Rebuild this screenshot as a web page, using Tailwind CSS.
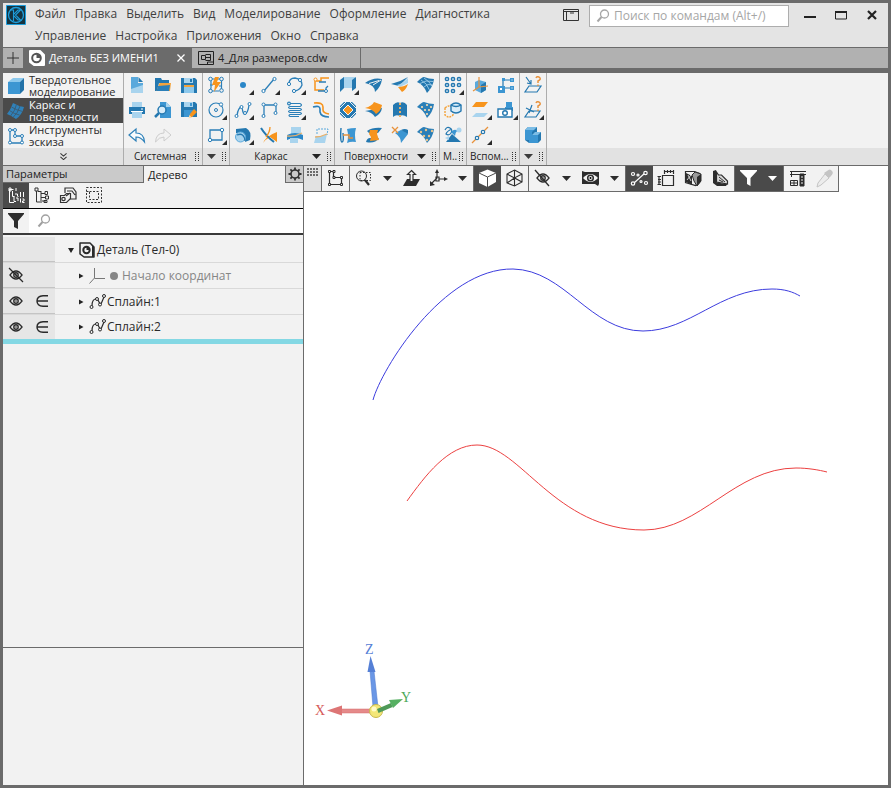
<!DOCTYPE html>
<html lang="ru">
<head>
<meta charset="utf-8">
<meta name="viewport" content="width=device-width, initial-scale=1">
<title>Деталь БЕЗ ИМЕНИ1</title>
<script src="https://cdn.jsdelivr.net/npm/@tailwindcss/browser@4"></script>
</head>
<body class="[font-family:'Open_Sans','Noto_Sans',sans-serif] text-xs text-[#3c3c3c] bg-[#f2f2f2]">
<svg class="hidden" aria-hidden="true">
  <symbol id="grip" viewBox="0 0 5 9"><path d="M0 0h1v1H0zM3 0h1v1H3zM0 2h1v1H0zM3 2h1v1H3zM0 4h1v1H0zM3 4h1v1H3zM0 6h1v1H0zM3 6h1v1H3zM0 8h1v1H0zM3 8h1v1H3z" fill="#333"/></symbol>
  <symbol id="caret" viewBox="0 0 9 5"><path d="M0 0h9L4.500 5z" fill="currentColor"/></symbol>
  <symbol id="corner" viewBox="0 0 5 5"><path d="M5 0v5H0z" fill="#2b2b2b" stroke="none"/></symbol>
  <symbol id="eye" viewBox="0 0 14 12"><path d="M1 6q6-8 12 0q-6 8-12 0z" fill="none" stroke="currentColor" stroke-width="1.300"/><circle cx="7" cy="6" r="2.200" fill="none" stroke="currentColor" stroke-width="1.400"/><circle cx="7" cy="6" r=".8" fill="currentColor"/></symbol>
  <symbol id="spline" viewBox="0 0 18 16"><path d="M3 12q0-7 4-7M9 6l2 4M12 10l3-7" fill="none" stroke="currentColor" stroke-width="1.200"/><g fill="#f2f2f2" stroke="currentColor"><circle cx="2.500" cy="13" r="1.500"/><circle cx="8" cy="5" r="1.500"/><circle cx="11" cy="10.500" r="1.500"/><circle cx="15" cy="2" r="1.500"/></g></symbol>
  <symbol id="lens" viewBox="0 0 14 14"><circle cx="8.500" cy="5" r="4" fill="none" stroke="currentColor" stroke-width="1.300"/><path d="M5.500 8L1.500 12.500" stroke="currentColor" stroke-width="2"/></symbol>
</svg>

<div class="flex min-h-screen flex-col border-3 border-[#6b6b6b]">
  <header class="flex items-start bg-[#e4e4e4]">
    <svg class="mt-0.5 ml-[3px] size-5 shrink-0" viewBox="0 0 20 20" fill="none" stroke="#1d9ddb"><path d="M.5.5h19v19H.5z" fill="#15333f"/><circle cx="10" cy="10" r="7.500" stroke-width="1.300"/><path d="M4 5h3.500v4.500L12 5h2.500L9.500 10l5 5H12L7.500 10.500V16" stroke-width="1.100"/></svg>
    <nav class="ml-[9px] flex min-w-0 flex-1 flex-wrap gap-x-[9px] pr-4 leading-[22px] text-[#3f3f3f]">
      <a href="#">Файл</a><a href="#">Правка</a><a href="#">Выделить</a><a href="#">Вид</a><a href="#">Моделирование</a><a href="#">Оформление</a><a href="#">Диагностика</a><span class="h-0 w-full"></span><a href="#">Управление</a><a href="#">Настройка</a><a href="#">Приложения</a><a href="#">Окно</a><a href="#">Справка</a>
    </nav>
    <button aria-label="Вид окна" class="mt-1.5 mr-2.5 shrink-0"><svg class="h-3 w-4" viewBox="0 0 16 12" fill="none" stroke="#333"><path d="M.5.5h15v11H.5zM.5 2.500h15M3.500 3v9"/><path d="M7 4h4"/></svg></button>
    <label class="mt-0.5 flex h-[22px] w-[200px] shrink-0 items-center border border-[#adadad] bg-white pl-1.5 text-[#a6a6a6]">
      <svg class="size-3.5 shrink-0"><use href="#lens"/></svg>
      <input type="search" aria-label="Поиск по командам" placeholder="Поиск по командам (Alt+/)" class="ml-1 w-full min-w-0 bg-transparent outline-none placeholder:text-[#a6a6a6]">
    </label>
    <div class="ml-[5px] mr-px flex h-6 shrink-0 text-[#222]">
      <button aria-label="Свернуть" class="grid w-[31px] place-items-center"><svg class="size-3.5" viewBox="0 0 14 14"><path d="M1 9h12" stroke="currentColor" stroke-width="2"/></svg></button>
      <button aria-label="Развернуть" class="grid w-[31px] place-items-center"><svg class="size-3.5" viewBox="0 0 14 14" fill="none" stroke="currentColor"><path d="M1.500 4v7h11V4"/><path d="M1 4h12" stroke-width="2"/></svg></button>
      <button aria-label="Закрыть" class="grid w-[31px] place-items-center"><svg class="size-3.5" viewBox="0 0 14 14"><path d="M3 3l8 8M11 3l-8 8" stroke="currentColor" stroke-width="2.200"/></svg></button>
    </div>
  </header>

  <div class="flex h-[26px] border-t border-b-5 border-[#6b6b6b] bg-[#b1b1b1]">
    <button aria-label="Новая вкладка" class="grid w-5 place-items-center"><svg class="size-3" viewBox="0 0 12 12"><path d="M6 0v12M0 6h12" stroke="#333"/></svg></button>
    <div class="flex w-[169px] items-center bg-[#6b6b6b] pl-1.5 text-white">
      <svg class="size-4" viewBox="0 0 16 16"><path d="M1 1h10l4 4v10H5l-4-3z" fill="#fff" stroke="#fff" stroke-width="2" stroke-linejoin="round"/><circle cx="7.500" cy="8" r="4.300" fill="#fff" stroke="#555" stroke-width="2"/><path d="M7.500 8l0-4q4 0 4 4z" fill="#555"/></svg>
      <a href="#" class="ml-1 flex-1 text-[11px] whitespace-nowrap">Деталь БЕЗ ИМЕНИ1</a>
      <button aria-label="Закрыть вкладку" class="mr-[7px]"><svg class="size-2" viewBox="0 0 8 8"><path d="M.5.5l7 7M7.500.5l-7 7" stroke="#fff" stroke-width="1.300"/></svg></button>
    </div>
    <a href="#" class="flex w-[169px] items-center border-r border-[#6b6b6b] pl-1.5 text-[11px] text-[#222]">
      <svg class="h-3.5 w-4" viewBox="0 0 16 14" fill="none" stroke="#222"><path d="M.5.5h15v13H.5z"/><path d="M3.500 4.500h4v4h-4zM7.500 3.500h5v6h-5M8 6.500h4M9.500 13v-2h6"/></svg>
      <span class="ml-1 whitespace-nowrap">4_Для размеров.cdw</span>
    </a>
  </div>

  <section aria-label="Инструменты" class="flex border-b border-[#6b6b6b] bg-[#f2f2f2]">
    <div class="flex w-[121px] shrink-0 flex-col border-r border-[#adadad] text-[11px] leading-3 whitespace-nowrap text-[#2a2a2a]">
      <button class="flex h-[25px] items-center pl-1 text-left"><svg class="size-[18px] shrink-0" viewBox="0 0 18 18"><path d="M1 5l5-4h11l-4 4z" fill="#8cc8ec"/><path d="M1 5h12v12H1z" fill="#3c96d2"/><path d="M13 5l4-4v12l-4 4z" fill="#2272a8"/></svg><span class="ml-1">Твердотельное<br>моделирование</span></button>
      <button class="flex h-[25px] items-center bg-[#4a4a4a] pl-1 text-left text-white"><svg class="size-[18px] shrink-0" viewBox="0 0 18 18"><path d="M6 1q5 3 11 4-2 8-8 12Q5 14 0 12 4 7 6 1z" fill="#2f80b8"/><path d="M9.500 2.500Q8 9 3.500 14M13 4q-2 7-7 11.500M4.500 5Q9 8 15.500 9.500M2.500 8.500Q7 12 12.500 13" stroke="#3d5668" stroke-width=".8" fill="none"/></svg><span class="ml-1">Каркас и<br>поверхности</span></button>
      <button class="flex h-[25px] items-center pl-1 text-left"><svg class="size-[18px] shrink-0" viewBox="0 0 18 18" fill="#fff" stroke="#2b7fb8"><path d="M3 16V3h5v6h7v7z" fill="none" stroke-width="1.300"/><circle cx="3" cy="3" r="1.500"/><circle cx="8" cy="3" r="1.500"/><circle cx="8" cy="9" r="1.500"/><circle cx="15" cy="9" r="1.500"/><circle cx="3" cy="15.500" r="1.500"/><circle cx="15" cy="15.500" r="1.500"/></svg><span class="ml-1">Инструменты<br>эскиза</span></button>
      <button aria-label="Ещё наборы" class="grid h-[17px] place-items-center bg-[#e2e2e2]"><svg class="h-[7px] w-[7px]" viewBox="0 0 8 8" fill="none" stroke="#333" stroke-width="1.200"><path d="M.5.5L4 3.500 7.500.5M.5 4.500L4 7.500l3.500-3"/></svg></button>
    </div>

    <!-- Системная -->
    <div class="w-[79px] shrink-0 border-r border-[#adadad] [&_svg]:block">
      <div class="grid grid-cols-[repeat(3,26px)] auto-rows-[25px]">
        <button aria-label="Создать"><svg class="h-[25px] w-[26px]" viewBox="0 0 26 25"><path d="M7 4h7v6h5v10H7z" fill="#a9d4ee"/><path d="M7 4h7v6h5v2L7 16z" fill="#5aa9dc"/><path d="M14.500 4L19 9h-4.500z" fill="#2478b0"/></svg></button>
        <button aria-label="Открыть"><svg class="h-[25px] w-[26px]" viewBox="0 0 26 25"><path d="M5 5h6l1 2h7v3H9l-2 8H5z" fill="#2478b0"/><path d="M9.500 10H21l-1 8H6.500z" fill="#f3a33c"/><path d="M8 13l12-1-1 6H6.500z" fill="#2b7fb8"/></svg></button>
        <button aria-label="Сохранить"><svg class="h-[25px] w-[26px]" viewBox="0 0 26 25"><path d="M5 5h14l2 2v13H5z" fill="#2478b0"/><path d="M8 5h9v5H8z" fill="#a9d4ee"/><path d="M14 6h2v3h-2z" fill="#2478b0"/><path d="M8 12h10v8H8z" fill="#8cc8ec"/><path d="M8 12h10v2H8z" fill="#f3a33c"/></svg></button>
        <button aria-label="Печать"><svg class="h-[25px] w-[26px]" viewBox="0 0 26 25"><path d="M8 4h10v5H8z" fill="#a9d4ee"/><path d="M5 9h16v7H5z" fill="#2478b0"/><path d="M8 14h10v6H8z" fill="#a9d4ee"/><path d="M7 13h12v1H7zM17 10.500h2v1h-2z" fill="#fff"/></svg></button>
        <button aria-label="Предварительный просмотр"><svg class="h-[25px] w-[26px]" viewBox="0 0 26 25"><path d="M10 4h6l5 5v11H10z" fill="#3c96d2"/><path d="M16 4l5 5h-5z" fill="#a9d4ee"/><circle cx="12" cy="12" r="4" fill="#d7ecf9" stroke="#2478b0" stroke-width="1.500"/><path d="M9 15l-4 4" stroke="#2478b0" stroke-width="2.500"/></svg></button>
        <button aria-label="Сохранить как"><svg class="h-[25px] w-[26px]" viewBox="0 0 26 25"><path d="M5 4h14l2 2v13H5z" fill="#2478b0"/><path d="M8 4h9v5H8z" fill="#a9d4ee"/><path d="M14 5h2v3h-2zM8 12h9v7H8z" fill="#3c96d2"/><path d="M18 11l3 3-5 5-3 1 1-4z" fill="#f7941d"/><path d="M13.500 17l2 2.500-3 1z" fill="#f9dcb0"/></svg></button>
        <button aria-label="Отменить"><svg class="h-[25px] w-[26px]" viewBox="0 0 26 25"><path d="M12 6v4q8 0 8.500 9Q17 14 12 14v4l-7-6z" fill="#f8fbfd" stroke="#2b7fb8" stroke-width="1.200"/></svg></button>
        <button aria-label="Повторить"><svg class="h-[25px] w-[26px]" viewBox="0 0 26 25"><path d="M14 6v4q-8 0-8.500 9Q9 14 14 14v4l7-6z" fill="none" stroke="#cdcdcd"/></svg></button>
      </div>
      <div class="flex h-[17px] items-center bg-[#e2e2e2] pr-0.5 pl-2.5 text-[10px] text-[#222]"><span class="flex-1">Системная</span><svg class="h-[9px] w-[5px]"><use href="#grip"/></svg></div>
    </div>

    <div class="w-[27px] shrink-0 border-r border-[#adadad] [&_svg]:block">
      <div class="grid grid-cols-[26px] auto-rows-[25px]">
        <button aria-label="Обновить"><svg class="h-[25px] w-[26px]" viewBox="0 0 26 25"><g fill="#f2f2f2" stroke="#2b7fb8"><path d="M8 6v9l-1 3M18.500 6v9l-1 4M8 6h10M9 18h7M7 12h3M16 13h3" fill="none" stroke-width="1.200"/><circle cx="7.500" cy="6" r="1.800"/><circle cx="18.500" cy="6" r="1.800"/><circle cx="7.500" cy="18" r="1.800"/><circle cx="18.500" cy="17.500" r="1.800"/></g><path d="M12 4h4l-2 5h4l-7 10 1-7H9z" fill="#f7941d"/></svg></button>
        <button aria-label="Окружность"><svg class="h-[25px] w-[26px]" viewBox="0 0 26 25" fill="none" stroke="#2b7fb8"><circle cx="13" cy="12" r="7" stroke-width="1.200"/><circle cx="13" cy="12" r="1.500"/><circle cx="18" cy="6.500" r="1.700" fill="#fff"/><use href="#corner" x="19" y="17" width="5" height="5"/></svg></button>
        <button aria-label="Прямоугольник"><svg class="h-[25px] w-[26px]" viewBox="0 0 26 25" fill="#fff" stroke="#2b7fb8"><path d="M7 7h12v10H7z" fill="none" stroke-width="1.300"/><circle cx="7" cy="17" r="1.700"/><circle cx="19" cy="7" r="1.700"/><use href="#corner" x="19" y="17" width="5" height="5"/></svg></button>
      </div>
      <div class="flex h-[17px] items-center justify-between bg-[#e2e2e2] pr-0.5 pl-1"><svg class="h-[5px] w-[9px]"><use href="#caret"/></svg><svg class="h-[9px] w-[5px]"><use href="#grip"/></svg></div>
    </div>

    <!-- Каркас -->
    <div class="w-[105px] shrink-0 border-r border-[#adadad] [&_svg]:block">
      <div class="grid grid-cols-[repeat(4,26px)] auto-rows-[25px]">
        <button aria-label="Точка"><svg class="h-[25px] w-[26px]" viewBox="0 0 26 25"><circle cx="13" cy="12" r="3" fill="#2b87c8"/><use href="#corner" x="19" y="17" width="5" height="5"/></svg></button>
        <button aria-label="Отрезок"><svg class="h-[25px] w-[26px]" viewBox="0 0 26 25" fill="#fff" stroke="#2b7fb8"><path d="M8 18L18 6" stroke-width="1.300"/><circle cx="7.500" cy="18" r="1.600"/><circle cx="18.500" cy="6" r="1.600"/><use href="#corner" x="19" y="17" width="5" height="5"/></svg></button>
        <button aria-label="Дуга"><svg class="h-[25px] w-[26px]" viewBox="0 0 26 25" fill="#fff" stroke="#2b7fb8"><path d="M7 11q0-6 6-6 7 1 7 7-2 5-7 6" fill="none" stroke-width="1.300"/><circle cx="7" cy="11" r="1.600"/><circle cx="18" cy="7" r="1.600"/><circle cx="12" cy="18" r="1.600"/><use href="#corner" x="19" y="17" width="5" height="5"/></svg></button>
        <button aria-label="Контур"><svg class="h-[25px] w-[26px]" viewBox="0 0 26 25" fill="none"><path d="M21 5h-8v3H8M7 7v10h9" stroke="#f7941d" stroke-width="1.500"/><path d="M18 9h-7M10 18h8v-3l2-2" stroke="#2b7fb8" stroke-width="1.300"/><circle cx="7.500" cy="6.500" r="1.500" fill="#fff" stroke="#f7941d"/><circle cx="18" cy="18" r="1.500" fill="#fff" stroke="#2b7fb8"/></svg></button>
        <button aria-label="Сплайн"><svg class="h-[25px] w-[26px]" viewBox="0 0 26 25" fill="#fff" stroke="#2b7fb8"><path d="M7 18q1-9 5-9 1 8 3 7 3-1 4-9" fill="none" stroke-width="1.300"/><circle cx="6.500" cy="18" r="1.500"/><circle cx="11.500" cy="9" r="1.500"/><circle cx="15" cy="15" r="1.500"/><circle cx="19.500" cy="6" r="1.500"/><use href="#corner" x="19" y="17" width="5" height="5"/></svg></button>
        <button aria-label="Ломаная"><svg class="h-[25px] w-[26px]" viewBox="0 0 26 25" fill="#fff" stroke="#2b7fb8"><path d="M8 18V7h12v7" fill="none" stroke-width="1.300"/><circle cx="7.500" cy="18" r="1.500"/><circle cx="7.500" cy="6.500" r="1.500"/><circle cx="19.500" cy="6.500" r="1.500"/><circle cx="19.500" cy="15" r="1.500"/></svg></button>
        <button aria-label="Спираль"><svg class="h-[25px] w-[26px]" viewBox="0 0 26 25" fill="none" stroke="#2b7fb8" stroke-width="1.200"><path d="M8 5.500h10q3 1.500 0 3H8q-3 1 0 2h10q3 1 0 2H8q-3 1 0 2h10q3 1 0 2H8q-2 1 0 2h9"/><circle cx="7" cy="5.500" r="1.400" fill="#fff"/><use href="#corner" x="19" y="17" width="5" height="5"/></svg></button>
        <button aria-label="Эквидистанта"><svg class="h-[25px] w-[26px]" viewBox="0 0 26 25" fill="none" stroke-width="1.600"><path d="M5 9q7-2 7 2v3q1 5 9 5" stroke="#2b7fb8"/><path d="M6 5q9-1 9 4v3q0 3 6 4" stroke="#f7941d"/></svg></button>
        <button aria-label="Линия пересечения"><svg class="h-[25px] w-[26px]" viewBox="0 0 26 25"><path d="M6 6l10-1q6 3 4 12l-5 2q2-9-9-9z" fill="#2478b0"/><circle cx="10.500" cy="14" r="5" fill="#a9d4ee" stroke="#5aa9dc"/><path d="M7 12q7-3 8 6" stroke="#2478b0" stroke-width="1.300" fill="none"/><use href="#corner" x="19" y="17" width="5" height="5"/></svg></button>
        <button aria-label="Проекционная кривая"><svg class="h-[25px] w-[26px]" viewBox="0 0 26 25"><path d="M21 9v10l-7-5q-4 2-7 6 3-7 14-11z" fill="#f7941d"/><path d="M5 5q5 8 13 14" stroke="#2478b0" stroke-width="2" fill="none"/><path d="M14 4q0 5-4 10" stroke="#f7941d" stroke-width="1.300" fill="none"/></svg></button>
        <button aria-label="Линия разъёма"><svg class="h-[25px] w-[26px]" viewBox="0 0 26 25"><path d="M9 4h10v8H9z" fill="#a9d4ee"/><path d="M5 12q8-4 16 0v5q-8-4-16 0z" fill="#2b87c8"/><path d="M8 15h8v5H8z" fill="#a9d4ee"/><path d="M5 13q8 1 15-3" stroke="#e8b06a" stroke-width="1.300" fill="none"/></svg></button>
        <button aria-label="Изопараметрическая кривая"><svg class="h-[25px] w-[26px]" viewBox="0 0 26 25"><path d="M8 13q6 1 11-2l-2 9H6z" fill="#a9d4ee"/><path d="M9 11V6h11l-1 6" fill="none" stroke="#5aa9dc" stroke-dasharray="2 1"/><path d="M7 14q6 0 12-3" stroke="#e8b06a" stroke-width="1.300" fill="none"/></svg></button>
      </div>
      <div class="flex h-[17px] items-center bg-[#e2e2e2] pr-0.5 text-[10px] text-[#222]"><span class="flex-1 text-center">Каркас</span><svg class="mr-1.5 h-[5px] w-[9px]"><use href="#caret"/></svg><svg class="h-[9px] w-[5px]"><use href="#grip"/></svg></div>
    </div>

    <!-- Поверхности -->
    <div class="w-[105px] shrink-0 border-r border-[#adadad] [&_svg]:block">
      <div class="grid grid-cols-[repeat(4,26px)] auto-rows-[25px]">
        <button aria-label="Поверхность выдавливания"><svg class="h-[25px] w-[26px]" viewBox="0 0 26 25"><path d="M8 4h12v11H8z" fill="#a9d4ee"/><path d="M5 7l4-3v11l-4 4zM17 7l4-3v11l-4 3z" fill="#2478b0"/><use href="#corner" x="19" y="17" width="5" height="5"/></svg></button>
        <button aria-label="Поверхность вращения"><svg class="h-[25px] w-[26px]" viewBox="0 0 26 25"><path d="M4 10Q12 4 21 6q-1 8-7 13 0-7-10-9z" fill="#2478b0"/><path d="M8 10.500l10-3M12 12l8-5" stroke="#f2f2f2"/></svg></button>
        <button aria-label="Линейчатая поверхность"><svg class="h-[25px] w-[26px]" viewBox="0 0 26 25"><path d="M4 11q9-2 17-7l-9 9z" fill="#2478b0"/><path d="M10 12q5-1 11-7v5l-8 4z" fill="#a9d4ee"/><path d="M11 14q6 0 10-3-2 6-6 8z" fill="#f7941d"/></svg></button>
        <button aria-label="Поверхность по сети кривых"><svg class="h-[25px] w-[26px]" viewBox="0 0 26 25"><path d="M4 9q5-5 7-5 5 2 10 2-1 8-7 14-3-8-10-11z" fill="#2478b0"/><path d="M8 7q6 3 8.500 10M11 5q6 4 8 8M7 10.500q6-4 13-2M11 14q4-4 8-2" stroke="#a9d4ee" stroke-width=".8" fill="none"/></svg></button>
        <button aria-label="Заплатка"><svg class="h-[25px] w-[26px]" viewBox="0 0 26 25"><path d="M9 4h8l4 4v8l-4 4H9l-4-4V8z" fill="#2478b0"/><path d="M5 10l6-6M15 4l6 6M5 14l6 6M15 20l6-6" stroke="#f2f2f2"/><path d="M13 7l5 5-5 5-5-5z" fill="#f7941d" stroke="#f2f2f2"/></svg></button>
        <button aria-label="Эквидистанта поверхности"><svg class="h-[25px] w-[26px]" viewBox="0 0 26 25"><path d="M4 13l17-3q-1 6-7 9-3-5-10-6z" fill="#2478b0"/><path d="M4 10q7-2 9-6l8 3q-1 6-6 9-3-5-11-6z" fill="#f7941d"/></svg></button>
        <button aria-label="Сшивка поверхностей"><svg class="h-[25px] w-[26px]" viewBox="0 0 26 25"><path d="M6 7q4-4 7-2 4-2 7 2v12q-4-3-7-1-4-2-7 1z" fill="#2478b0"/><path d="M13 5v14" stroke="#e8b06a" stroke-width="2" stroke-dasharray="2 2"/></svg></button>
        <button aria-label="Поверхность по сети точек"><svg class="h-[25px] w-[26px]" viewBox="0 0 26 25"><path d="M4 9q5-5 7-5 5 2 10 2-1 8-7 14-3-8-10-11z" fill="#2b7fb8"/><g fill="#f9dcb0"><circle cx="9" cy="9" r="1.100"/><circle cx="14" cy="7" r="1.100"/><circle cx="18" cy="9" r="1.100"/><circle cx="12" cy="12" r="1.100"/><circle cx="16" cy="12" r="1.100"/><circle cx="14" cy="16" r="1.100"/></g></svg></button>
        <button aria-label="Продление поверхности"><svg class="h-[25px] w-[26px]" viewBox="0 0 26 25"><path d="M12 6q4-1 9-1-2 7 0 14-5-1-9 1 2-7 0-14z" fill="#3c96d2"/><path d="M6 5q-1 14 1 14 2 0 1-9" fill="none" stroke="#2478b0" stroke-width="1.400"/><path d="M8 12h6v3h4" stroke="#e8923c" fill="none" stroke-width="1.400"/></svg></button>
        <button aria-label="Усечение поверхности"><svg class="h-[25px] w-[26px]" viewBox="0 0 26 25"><path d="M6 8q6-4 15-3l-4 5H8zM5 19q1-4 4-4h9q-4 6-13 4z" fill="#2478b0"/><path d="M9 7h8l-1 4 2 6-9 1 1-4-2-3z" fill="#f7941d"/></svg></button>
        <button aria-label="Удаление граней"><svg class="h-[25px] w-[26px]" viewBox="0 0 26 25"><path d="M8 10l6-3q4 1 7 4l-7 9q0-6-6-10z" fill="#3c96d2"/><path d="M14 7q4-2 7 0v4z" fill="#2478b0"/><path d="M5 4l6 6M11 4l-6 6" stroke="#e8923c" stroke-width="1.300"/></svg></button>
        <button aria-label="Поверхность по пласту точек"><svg class="h-[25px] w-[26px]" viewBox="0 0 26 25"><path d="M4 9q5-5 7-5 5 2 10 2-1 8-7 14-3-8-10-11z" fill="#2b7fb8"/><g fill="#e8c48e"><circle cx="8" cy="9" r="1.200"/><circle cx="13" cy="7" r="1.200"/><circle cx="19" cy="8" r="1.200"/><circle cx="11" cy="13" r="1.200"/><circle cx="16" cy="13" r="1.200"/><circle cx="14" cy="17" r="1.200"/></g></svg></button>
      </div>
      <div class="flex h-[17px] items-center bg-[#e2e2e2] pr-0.5 text-[10px] text-[#222]"><span class="flex-1 text-center">Поверхности</span><svg class="mr-1.5 h-[5px] w-[9px]"><use href="#caret"/></svg><svg class="h-[9px] w-[5px]"><use href="#grip"/></svg></div>
    </div>

    <!-- Массив -->
    <div class="w-[27px] shrink-0 border-r border-[#adadad] [&_svg]:block">
      <div class="grid grid-cols-[26px] auto-rows-[25px]">
        <button aria-label="Массив по сетке"><svg class="h-[25px] w-[26px]" viewBox="0 0 26 25" fill="#fff" stroke="#2478b0" stroke-width="1.500"><circle cx="7" cy="6" r="1.600"/><circle cx="13" cy="6" r="1.600"/><circle cx="19" cy="6" r="1.600"/><circle cx="7" cy="12" r="1.600"/><circle cx="13" cy="12" r="1.600"/><circle cx="19" cy="12" r="1.600"/><circle cx="7" cy="18" r="1.600"/><circle cx="13" cy="18" r="1.600"/><use href="#corner" x="19" y="17" width="5" height="5"/></svg></button>
        <button aria-label="Копировать"><svg class="h-[25px] w-[26px]" viewBox="0 0 26 25" fill="none" stroke-width="1.400"><path d="M5 10q4-4 8 0v7q-4 4-8 0z" stroke="#f3a33c" stroke-dasharray="2 1"/><path d="M11 7q5-4 10 0v6q-5 4-10 0z" fill="#d9edf9" stroke="#2478b0"/><path d="M11 7q5 3 10 0" stroke="#2478b0"/></svg></button>
        <button aria-label="Зеркальное отражение"><svg class="h-[25px] w-[26px]" viewBox="0 0 26 25"><path d="M5 7q2-4 5-2t1 5-5 1q1-3 6-5" fill="none" stroke="#2478b0" stroke-width="1.200"/><circle cx="19" cy="7" r="2.500" fill="#a9d4ee"/><path d="M11 9q4-4 6-1-2 2-2 5z" fill="#3c96d2"/><path d="M6 19l6-8 9 8z" fill="#2478b0"/><path d="M5 15l4-2v4z" fill="#a9d4ee"/></svg></button>
      </div>
      <div class="flex h-[17px] items-center justify-between bg-[#e2e2e2] pr-0.5 pl-[3px] text-[10px] text-[#222]"><span class="whitespace-nowrap">М..</span><svg class="h-[9px] w-[5px] shrink-0"><use href="#grip"/></svg></div>
    </div>

    <!-- Вспомогательные -->
    <div class="w-[53px] shrink-0 border-r border-[#adadad] [&_svg]:block">
      <div class="grid grid-cols-[repeat(2,26px)] auto-rows-[25px]">
        <button aria-label="Система координат"><svg class="h-[25px] w-[26px]" viewBox="0 0 26 25"><path d="M8 9l4-2 7 2v8l-5 3-6-3z" fill="#5aa9dc"/><path d="M14 12l5-3v8l-5 3z" fill="#2478b0"/><path d="M12 4v10l-6 4M12 14l9-1" stroke="#e8923c" stroke-width="1.200" fill="none"/></svg></button>
        <button aria-label="Контрольные точки"><svg class="h-[25px] w-[26px]" viewBox="0 0 26 25"><path d="M10 14V7h9M11 15h8" stroke="#2478b0" stroke-width="1.200" fill="none"/><path d="M5 13h7v7H5zM9 5h3v3H9zM17 5h4v4h-4zM17 13h4v4h-4z" fill="#3c96d2"/><path d="M7 15h2v2H7zM18.500 6.500h1v1h-1zM18.500 14.500h1v1h-1z" fill="#fff"/></svg></button>
        <button aria-label="Смещённая плоскость"><svg class="h-[25px] w-[26px]" viewBox="0 0 26 25"><path d="M9 4h12l-4 5H5z" fill="#f7941d"/><path d="M9 15h12l-4 4H5z" fill="#a9d4ee"/><use href="#corner" x="20" y="17" width="5" height="5"/></svg></button>
        <button aria-label="Вставить компонент"><svg class="h-[25px] w-[26px]" viewBox="0 0 26 25"><path d="M13 4h6v5h1v4h-8V9h1z" fill="#3c96d2"/><path d="M5 11h14v8H5z" fill="#fff" stroke="#2478b0" stroke-width="1.400"/><circle cx="12" cy="15" r="2.300" fill="none" stroke="#2478b0" stroke-width="1.400"/><use href="#corner" x="20" y="17" width="5" height="5"/></svg></button>
        <button aria-label="Ось через две точки"><svg class="h-[25px] w-[26px]" viewBox="0 0 26 25"><path d="M5 20L21 4" stroke="#e8923c" stroke-width="1.300"/><g fill="#fff" stroke="#2478b0" stroke-width="1.200"><circle cx="10" cy="15" r="1.700"/><circle cx="16" cy="9" r="1.700"/></g><use href="#corner" x="20" y="17" width="5" height="5"/></svg></button>
      </div>
      <div class="flex h-[17px] items-center justify-between bg-[#e2e2e2] pr-0.5 pl-[3px] text-[10px] text-[#222]"><span>Вспом...</span><svg class="h-[9px] w-[5px] shrink-0"><use href="#grip"/></svg></div>
    </div>

    <div class="w-[27px] shrink-0 border-r border-[#adadad] [&_svg]:block">
      <div class="grid grid-cols-[26px] auto-rows-[25px]">
        <button aria-label="Проверка поверхности"><svg class="h-[25px] w-[26px]" viewBox="0 0 26 25" fill="none" stroke="#2478b0" stroke-width="1.200"><path d="M9 13h12l-4 6H5z"/><path d="M6 4l5 7M11 7v4l-4-1"/><path d="M16 5q1-2 3-1 3 2-1 4v2M18 11.500v1.500" stroke="#e8923c" stroke-width="1.500"/></svg></button>
        <button aria-label="Проверка кривой"><svg class="h-[25px] w-[26px]" viewBox="0 0 26 25" fill="none" stroke="#2478b0" stroke-width="1.200"><path d="M9 13h11l-4 6H5z"/><path d="M6 10l8 4M12 7l-3 8"/><path d="M16 5q1-2 3-1 3 2-1 4v2M18 11.500v1.500" stroke="#e8923c" stroke-width="1.500"/><use href="#corner" x="19" y="17" width="5" height="5"/></svg></button>
        <button aria-label="Тело"><svg class="h-[25px] w-[26px]" viewBox="0 0 26 25"><path d="M5 7l3-3h9v5h4v8l-3 3H9l-4-3z" fill="#2478b0"/><path d="M5 7l3-3h9l-3 3zM12 12l3-3h6l-3 3z" fill="#7cbde6"/><path d="M5 7h9l-2 2v3h6v8H9v-3H5z" fill="#3c96d2"/></svg></button>
      </div>
      <div class="flex h-[17px] items-center justify-between bg-[#e2e2e2] pr-0.5 pl-1"><svg class="h-[5px] w-[9px]"><use href="#caret"/></svg><svg class="h-[9px] w-[5px]"><use href="#grip"/></svg></div>
    </div>
    <div class="flex flex-1 flex-col justify-end"><div class="h-[17px] bg-[#e2e2e2]"></div></div>
  </section>

  <main class="flex flex-1">
    <aside class="flex w-[301px] shrink-0 flex-col border-r border-[#6b6b6b] bg-[#f2f2f2]">
      <div class="flex h-[17px] text-[11px] leading-4 text-[#222]">
        <button class="w-[141px] border-r border-b border-[#6b6b6b] bg-[#cacaca] pl-[3px] text-left">Параметры</button>
        <button class="flex-1 pl-1 text-left">Дерево</button>
        <button aria-label="Настройка панели" class="grid w-[18px] place-items-center border-b border-l border-[#6b6b6b] bg-[#cacaca]"><svg class="size-3.5" viewBox="0 0 14 14" fill="none" stroke="#333"><circle cx="7" cy="7" r="4" stroke-width="1.600"/><path d="M7 .5V3M7 11v2.500M.5 7H3M11 7h2.500M2.400 2.400l1.700 1.700M9.900 9.900l1.700 1.700M11.600 2.400L9.900 4.100M4.100 9.900l-1.700 1.700" stroke-width="1.800"/></svg></button>
      </div>
      <div class="flex h-[26px] border-b border-black">
        <button aria-label="Структура модели" class="w-[26px] bg-[#4a4a4a]"><svg class="h-[25px] w-[26px]" viewBox="0 0 26 25" fill="none" stroke="#fff"><path d="M11 19.500H6.500V6M6 6.500h4.500M6 5h2v3H6zM9.500 8v5.500h2M11 13.500v5h2"/><path d="M13 5v3M12 11h2.500v2M17.500 9v5M20.500 9v5M15 13v1M13 15h2v3M17.500 15.500v4M19.500 16h1.500v2h-1.500v1.500h2"/></svg></button>
        <button aria-label="Последовательность построения" class="w-[26px]"><svg class="h-[25px] w-[26px]" viewBox="0 0 26 25" fill="none" stroke="#333"><path d="M6 5h3v3H6zM7.500 8v11H13M12 8.500h-3M12 8v10M12 10.500h4M12 14.500h4M13 18h4"/><path d="M16 8.500h2.500v3H16zM16.500 13h3v3h-3zM15 17.500h3v2h-3z"/></svg></button>
        <button aria-label="Исполнения" class="w-[26px]"><svg class="h-[25px] w-[26px]" viewBox="0 0 26 25" fill="none" stroke="#333" stroke-width="1.200"><path d="M10 10V5h8l3 4v7h-6M12 8h5l3 4"/><path d="M5.500 12.500h4l2-2h4v5l-4 4h-6z" fill="#f2f2f2"/><circle cx="8.500" cy="16" r="1.700"/><path d="M11 13l4-3"/></svg></button>
        <button aria-label="Область" class="w-[26px]"><svg class="h-[25px] w-[26px]" viewBox="0 0 26 25" fill="none" stroke="#333" stroke-dasharray="2 1.500"><path d="M5.500 4.500h15v15h-15zM5.500 8.500h3M8.500 8.500h9v8h-9z"/></svg></button>
      </div>
      <div class="flex h-[26px] border-b-2 border-[#3a3a3a] bg-white">
        <button aria-label="Фильтр" class="grid w-[26px] place-items-center bg-[#f2f2f2]"><svg class="size-4" viewBox="0 0 16 16"><path d="M0 0h16v1L10 8v8l-4-2V8L0 1z" fill="#2d2d2d"/></svg></button>
        <label class="flex flex-1 items-center pl-2 text-[#a0a0a0]"><svg class="size-3.5 shrink-0"><use href="#lens"/></svg><input type="search" aria-label="Поиск в дереве" class="ml-1 w-full min-w-0 outline-none"></label>
      </div>
      <ul class="mt-0.5 text-[#2a2a2a] [&_svg]:block">
        <li class="flex h-[26px] border-b border-[#d9d9d9]">
          <span class="w-[52px] border-b border-[#c4c4c4] bg-[#e6e6e6]"></span>
          <span class="flex flex-1 items-center pl-[13px]"><svg class="h-1.5 w-1.5" viewBox="0 0 6 6"><path d="M0 1h6L3 6z" fill="#222"/></svg>
          <svg class="ml-[5px] size-4" viewBox="0 0 16 16"><path d="M1 1h10l4 4v10H5l-4-3z" fill="#f2f2f2" stroke="#2a2a2a" stroke-width="1.500" stroke-linejoin="round"/><path d="M11 1l4 4v10h-2V4z" fill="#2a2a2a"/><circle cx="7.500" cy="8" r="3.200" fill="#f2f2f2" stroke="#2a2a2a" stroke-width="2"/><path d="M7.500 8V5q3 0 3 3z" fill="#2a2a2a"/></svg><span class="ml-0.5">Деталь (Тел-0)</span></span>
        </li>
        <li class="flex h-[26px] border-b border-[#d9d9d9]">
          <span class="w-[52px] border-b border-[#c4c4c4] bg-[#e6e6e6]"><button aria-label="Показать начало координат" class="grid h-6 w-[26px] place-items-center"><svg class="h-4 w-4" viewBox="0 0 16 16"><use href="#eye" x="1" y="2" width="14" height="12"/><path d="M1 1l14 14" stroke="#2a2a2a" stroke-width="1.300"/></svg></button></span>
          <span class="flex flex-1 items-center pl-[23px] text-[#868686]"><svg class="size-1.5" viewBox="0 0 6 6"><path d="M1 .5v5L5.500 3z" fill="#222"/></svg>
          <svg class="ml-[5px] size-4" viewBox="0 0 16 16" fill="none" stroke="#777"><path d="M5.500 0v10L.5 15.500M5.500 10.500H16"/></svg><span class="ml-[5px] size-2 rounded-full bg-[#868686]"></span><span class="ml-1">Начало координат</span></span>
        </li>
        <li class="flex h-[26px] border-b border-[#d9d9d9]">
          <span class="flex w-[52px] border-b border-[#c4c4c4] bg-[#e6e6e6]"><button aria-label="Скрыть Сплайн:1" class="grid h-6 w-[26px] place-items-center"><svg class="h-3 w-3.5"><use href="#eye"/></svg></button><svg class="mt-1.5 ml-[7px] size-3" viewBox="0 0 12 12"><path d="M12 .7H7q-6 .3-6 5.300t6 5.300h5M1 6h11" fill="none" stroke="#2a2a2a" stroke-width="1.400"/></svg></span>
          <span class="flex flex-1 items-center pl-[23px]"><svg class="size-1.5" viewBox="0 0 6 6"><path d="M1 .5v5L5.500 3z" fill="#222"/></svg><svg class="ml-[5px] h-4 w-[18px]"><use href="#spline"/></svg><span>Сплайн:1</span></span>
        </li>
        <li class="flex h-6">
          <span class="flex w-[52px] bg-[#e6e6e6]"><button aria-label="Скрыть Сплайн:2" class="grid h-6 w-[26px] place-items-center"><svg class="h-3 w-3.5"><use href="#eye"/></svg></button><svg class="mt-1.5 ml-[7px] size-3" viewBox="0 0 12 12"><path d="M12 .7H7q-6 .3-6 5.300t6 5.300h5M1 6h11" fill="none" stroke="#2a2a2a" stroke-width="1.400"/></svg></span>
          <span class="flex flex-1 items-center pl-[23px]"><svg class="size-1.5" viewBox="0 0 6 6"><path d="M1 .5v5L5.500 3z" fill="#222"/></svg><svg class="ml-[5px] h-4 w-[18px]"><use href="#spline"/></svg><span>Сплайн:2</span></span>
        </li>
      </ul>
      <div class="h-[5px] bg-[#84d8e4]"></div>
      <div class="flex-1"></div>
      <div class="h-[138px] border-t border-[#6b6b6b]"></div>
    </aside>

    <section aria-label="Модель" class="flex min-w-0 flex-1 flex-col bg-white">
      <div class="flex h-[26px] self-start border-r border-b border-[#6b6b6b] bg-[#f2f2f2] text-[#2d2d2d] [&_svg]:block">
        <div class="w-[18px] border-r border-[#6b6b6b] bg-[#e2e2e2] pt-0.5 pl-[3px]"><svg class="h-2 w-[11px]" viewBox="0 0 11 8"><path d="M0 1h11M0 4h11M0 7h11" stroke="#444" stroke-width="1.500" stroke-dasharray="2 1"/></svg></div>
        <div class="border-r border-[#6b6b6b]">
          <button aria-label="Эскиз" class="w-[27px]"><svg class="h-[25px] w-[27px]" viewBox="0 0 27 25" fill="#f2f2f2" stroke="#2d2d2d"><path d="M7.500 18.500v-13h4v6h8v7z" fill="none" stroke-width="1.200"/><path d="M6.500 4.500h2v2h-2zM11 4.500h2v2h-2zM11 10.500h2v2h-2zM18.500 10.500h2v2h-2zM6.500 17.500h2v2h-2zM18.500 17.500h2v2h-2z"/></svg></button>
        </div>
        <div class="flex border-r border-[#6b6b6b]">
          <button aria-label="Масштаб" class="w-[27px]"><svg class="h-[25px] w-[27px]" viewBox="0 0 27 25" fill="none" stroke="#2d2d2d"><circle cx="11.500" cy="10" r="5"/><path d="M15 14l4 5" stroke-width="2.200"/><path d="M10 6.500h10.500v8H10z" stroke-dasharray="1.500 1.500"/></svg></button>
          <button aria-label="Варианты масштаба" class="grid w-[21px] place-items-center"><svg class="h-[5px] w-[9px]"><use href="#caret"/></svg></button>
          <button aria-label="Нормально к" class="w-[27px]"><svg class="h-[25px] w-[27px]" viewBox="0 0 27 25"><path d="M9 13h13l-4 7H5z" fill="#2d2d2d"/><path d="M13.500 4.500l4 4H15v7h-3v-7H9.500z" fill="#f2f2f2" stroke="#2d2d2d" stroke-width="1.200"/></svg></button>
          <button aria-label="Ориентация" class="w-[27px]"><svg class="h-[25px] w-[27px]" viewBox="0 0 27 25" fill="none" stroke="#2d2d2d"><path d="M12 6v6l-6 6M14 13h6M11 11h3v4h-3z" stroke-width="1.200"/><path d="M10 7l2-4 2 4zM19 11l4 2-4 2zM5 15l0 5 5-1z" fill="#2d2d2d" stroke="none"/></svg></button>
          <button aria-label="Варианты ориентации" class="grid w-[21px] place-items-center"><svg class="h-[5px] w-[9px]"><use href="#caret"/></svg></button>
        </div>
        <div class="flex border-r border-[#6b6b6b]">
          <button aria-label="Полутоновое" class="w-[27px] bg-[#4a4a4a]"><svg class="h-[25px] w-[27px]" viewBox="0 0 27 25"><path d="M13.500 3.500L22 7v9l-8.500 5L5 17V7z" fill="#fff"/><path d="M5 7l8.500 4L22 7M13.500 11v10" fill="none" stroke="#4a4a4a"/></svg></button>
          <button aria-label="Каркас" class="w-[27px]"><svg class="h-[25px] w-[27px]" viewBox="0 0 27 25" fill="none" stroke="#2d2d2d" stroke-width="1.100"><path d="M13.500 4L21 8v8l-7.500 4L6 17V8zM6 8l7.500 4L21 8M13.500 12v8M13.500 4v8M6 17l7.500-5 7.500 4"/></svg></button>
        </div>
        <div class="flex border-r border-[#6b6b6b]">
          <button aria-label="Скрыть объекты" class="w-[27px]"><svg class="h-[25px] w-[27px]" viewBox="0 0 27 25"><use href="#eye" x="6" y="6" width="16" height="12"/><path d="M6 4l14 16" stroke="#2d2d2d" stroke-width="1.300"/></svg></button>
          <button aria-label="Варианты скрытия" class="grid w-[21px] place-items-center"><svg class="h-[5px] w-[9px]"><use href="#caret"/></svg></button>
          <button aria-label="Показать объекты" class="w-[27px]"><svg class="h-[25px] w-[27px]" viewBox="0 0 27 25"><path d="M5 5l3 1h14v12l-1 2-3-2H5z" fill="#2d2d2d"/><path d="M6 12q7.500-8 15 0-7.500 8-15 0z" fill="#f2f2f2"/><circle cx="13.500" cy="12" r="2.800" fill="none" stroke="#2d2d2d" stroke-width="1.500"/><circle cx="13.500" cy="12" r="1"/></svg></button>
          <button aria-label="Варианты показа" class="grid w-[21px] place-items-center"><svg class="h-[5px] w-[9px]"><use href="#caret"/></svg></button>
        </div>
        <div class="flex border-r border-[#6b6b6b]">
          <button aria-label="Точки и кривые" class="w-[27px] bg-[#4a4a4a]"><svg class="h-[25px] w-[27px]" viewBox="0 0 27 25" fill="#4a4a4a" stroke="#fff" stroke-width="1.200"><path d="M8 17L19 7"/><circle cx="7" cy="8" r="1.500"/><circle cx="12" cy="9" r="1"/><circle cx="19.500" cy="7" r="1.700"/><circle cx="7" cy="17.500" r="1.700"/><circle cx="15" cy="15.500" r="1"/><circle cx="20" cy="17" r="1.500"/></svg></button>
          <button aria-label="Размеры" class="w-[27px]"><svg class="h-[25px] w-[27px]" viewBox="0 0 27 25" fill="none" stroke="#2d2d2d" stroke-width="1.200"><path d="M9.500 9.500h11v10h-11z"/><path d="M11.500 4v4M20.500 4v4M11 5.500h10M14.500 4v3M17.500 4v3M4.500 10.500H8M4.500 18.500H8M6 10v9M5 13.500h3M5 16h3"/></svg></button>
          <button aria-label="Сечение" class="w-[27px]"><svg class="h-[25px] w-[27px]" viewBox="0 0 27 25"><path d="M5.500 5.500h9l5 2v9l-4 3-10-3z" fill="#f2f2f2" stroke="#2d2d2d" stroke-width="1.200"/><path d="M6 7l6 3v9l-6-3z" fill="#2d2d2d"/><path d="M7 14l4-5M8 9l3 6" stroke="#f2f2f2" stroke-width=".8"/><path d="M12 9l3-3 6 2v7l-4 5-3-5z" fill="#999" stroke="#2d2d2d"/><path d="M17 11l4-3v7l-4 5z" fill="#2d2d2d"/></svg></button>
          <button aria-label="Упрощённое отображение" class="w-[27px]"><svg class="h-[25px] w-[27px]" viewBox="0 0 27 25"><path d="M6 5l3-1v12l8 2 4-1-2 3H10l-4-3z" fill="#2d2d2d"/><path d="M9.500 6l2 3h3l6 6v3l-11-2z" fill="#d8d8d8" stroke="#2d2d2d" stroke-width="1.200"/><path d="M12 11l6 5M12 14l4 2" stroke="#2d2d2d"/></svg></button>
        </div>
        <div class="flex border-r border-[#6b6b6b] bg-[#4a4a4a] text-white">
          <button aria-label="Фильтр объектов" class="w-[27px]"><svg class="h-[25px] w-[27px]" viewBox="0 0 27 25"><path d="M5 4h17v1l-6.500 7v8L12 18v-6L5 5z" fill="#fff"/></svg></button>
          <button aria-label="Варианты фильтра" class="grid w-[21px] place-items-center"><svg class="h-[5px] w-[9px]"><use href="#caret"/></svg></button>
        </div>
        <div class="flex">
          <button aria-label="Измерить" class="w-[27px]"><svg class="h-[25px] w-[27px]" viewBox="0 0 27 25" fill="none" stroke="#2d2d2d"><path d="M6 5.500h16M6 8.500h16M7.500 5v6M6.500 14.500h7v5h-7zM6 17h8M10 14v6"/><path d="M16 8h4v12h-4z" fill="#2d2d2d"/><path d="M17 11h2M17 14h2M17 17h2" stroke="#f2f2f2"/></svg></button>
          <button aria-label="Копировать свойства" class="w-[27px]" disabled><svg class="h-[25px] w-[27px]" viewBox="0 0 27 25"><path d="M16 5q3-3 5 0 2 2-1 5l-2 2-5-5z" fill="#c4c4c4"/><path d="M14 8l4 4-8 7-4 2 1-4z" fill="#ececec" stroke="#c4c4c4"/></svg></button>
        </div>
      </div>
      <div class="min-h-0 flex-1">
        <svg class="block h-auto w-full" viewBox="304 192 584 593" fill="none">
          <path d="M373 400C381 370 443 268 513 269C565 270 590 331 643 331C690 331 720 289 772 289C785 289 793 292 800 296" stroke="#3c3cde"/>
          <path d="M407 501C425 476 448 445 477 445C520 445 555 530 644 530C700 530 735 468 796 468C808 468 819 470 827 472" stroke="#ec4040"/>
          <path d="M341 709h32v4h-32z" fill="#e58a8a" stroke="#d46a6a" stroke-width=".5"/><path d="M327 710.500l15-5v10z" fill="#dd7575"/>
          <path d="M370 671h4l4 36h-5z" fill="#6a97e6" stroke="#4a76cc" stroke-width=".5"/><path d="M370.500 656l5 16h-8z" fill="#5580d6"/>
          <circle cx="376" cy="711" r="6.500" fill="#f4e778" stroke="#c9b94c"/><circle cx="374" cy="709" r="2.500" fill="#fffbc8"/>
          <path d="M377 709l14-6 1.500 4-14 6z" fill="#4f9a58"/><path d="M389 700l14-1-10 9z" fill="#56b062"/>
          <g class="[font-family:'Liberation_Serif',serif] text-[14px]"><text x="315" y="715" fill="#d65a5a">X</text><text x="365" y="654" fill="#5580d6">Z</text><text x="401" y="702" fill="#4aa858">Y</text></g>
        </svg>
      </div>
    </section>
  </main>
</div>
</body>
</html>
